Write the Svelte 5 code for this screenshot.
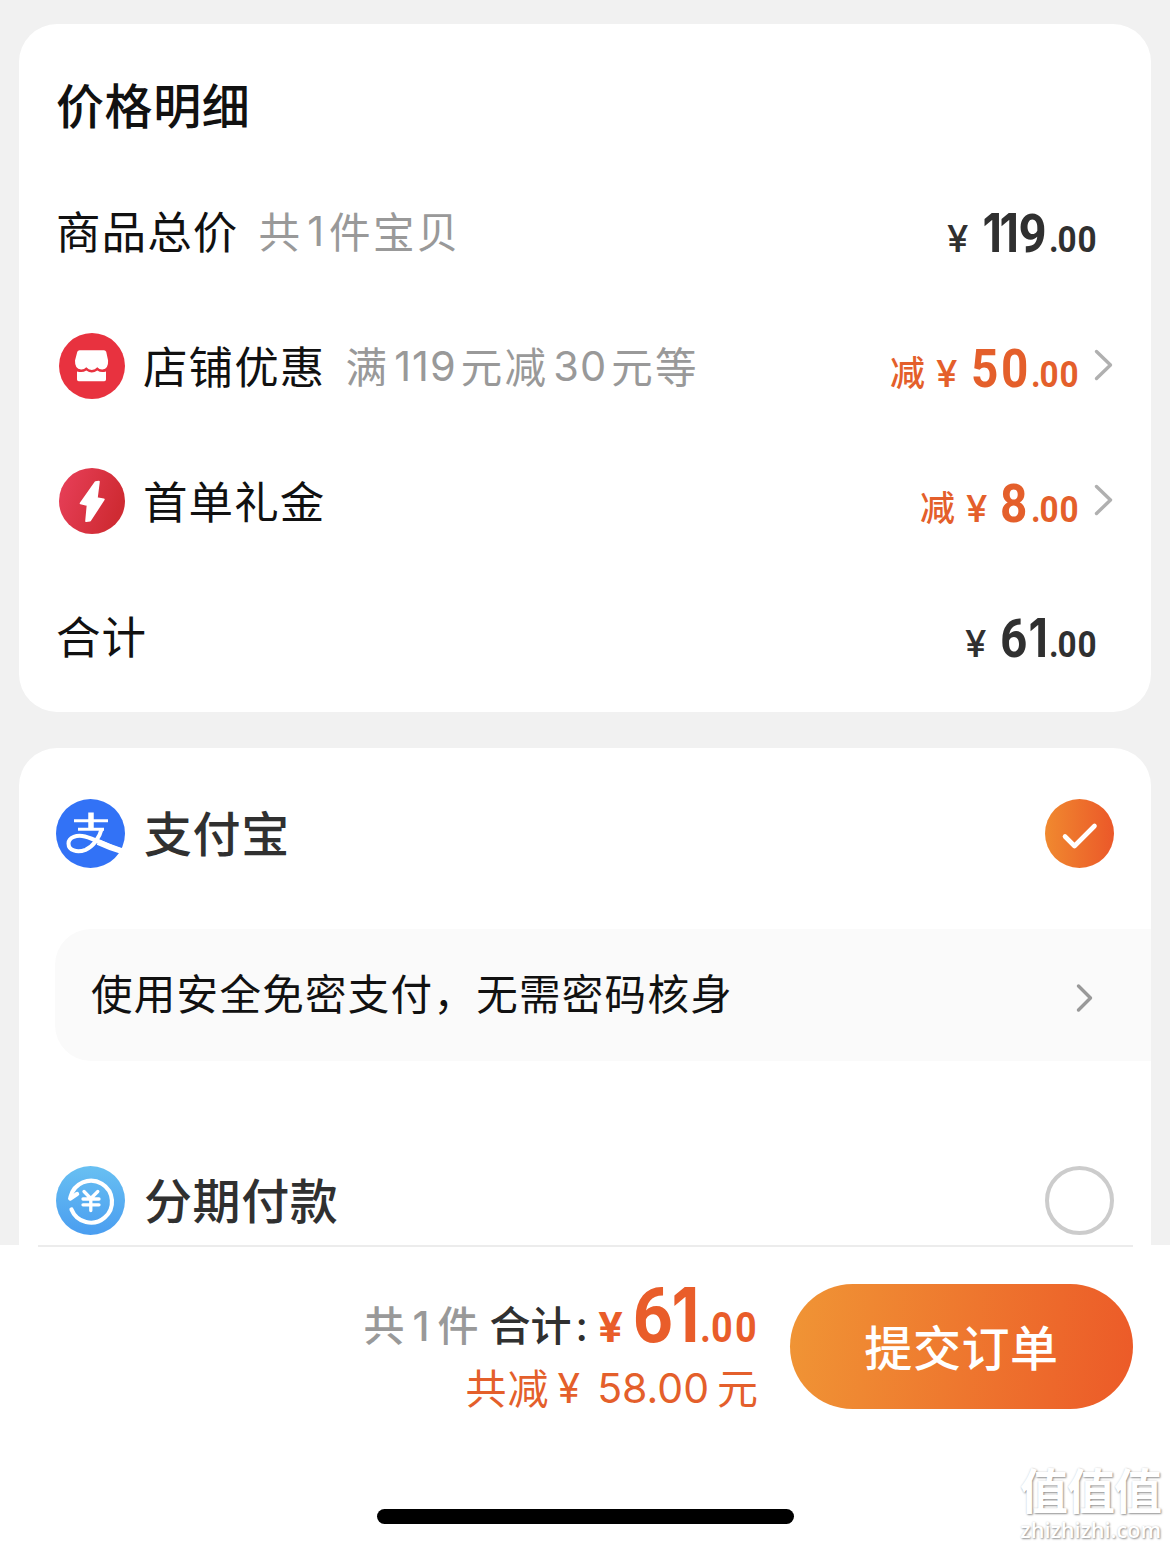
<script>
  // Glyph runs are measured from the right edge of each price: [character, x, horizontal scale].
  const rows = [
    {
      label: '商品总价', note: ['共', '1', '件宝贝'], icon: null, off: false,
      yen: -149, digits: [['1', -113.5, 0.85], ['1', -96.5, 0.85], ['9', -77.5, 0.93]]
    },
    {
      label: '店铺优惠', note: ['满', '119', '元减', '30', '元等'], icon: 'shop', off: true,
      word: -188, yen: -142, digits: [['5', -107, 0.9], ['0', -77, 0.9]]
    },
    {
      label: '首单礼金', note: [], icon: 'bolt', off: true,
      word: -158, yen: -112, digits: [['8', -78, 0.9]]
    },
    {
      label: '合计', note: [], icon: null, off: false,
      yen: -131, digits: [['6', -96, 0.9], ['1', -67.5, 0.85]]
    }
  ];
</script>

<main>
  <div class="scroll">
    <section class="card prices">
      <h2>价格明细</h2>
      {#each rows as row}
        <div class="row" class:off={row.off}>
          {#if row.icon === 'shop'}
            <svg class="badge" viewBox="0 0 66 66">
              <circle cx="33" cy="33" r="33" fill="#e8323f" />
              <path d="M20.500 17.300H45q1.600 0 2.200 1.500L49.100 27.500Q49.500 36 43.500 36.500 40.500 36.700 38.300 34.300 36 36.900 32.800 36.900 29.500 36.900 27.300 34.300 25 36.700 22 36.500 15.700 36 16 27.500L18.300 18.800q.6-1.500 2.200-1.500z" fill="#fff" />
              <path d="M18 38.400Q23.500 40.200 27.300 37.400 32.800 41.500 38.300 37.400 42 40.200 47 38.400V46.500q0 1.700-1.700 1.700H19.700q-1.700 0-1.700-1.700z" fill="#fff" />
            </svg>
          {:else if row.icon === 'bolt'}
            <svg class="badge" viewBox="0 0 66 66">
              <defs>
                <linearGradient id="bolt" x1="0" y1="0" x2="1" y2=".35">
                  <stop offset="0" stop-color="#e8405a" /><stop offset="1" stop-color="#cf2b33" />
                </linearGradient>
              </defs>
              <circle cx="33" cy="33" r="33" fill="url(#bolt)" />
              <path d="M36.500 14.200 39.800 13.700 37.700 30.300 44.700 31.500 31 52.500 27.200 53 28.700 37 21.700 35.300z" fill="#fff" stroke="#fff" stroke-width="2" stroke-linejoin="round" />
            </svg>
          {/if}
          <span class="label">{row.label}</span>
          <span class="note">
            {#each row.note as part}<span class:num={/\d/.test(part)}>{part}</span>{/each}
          </span>
          <svg class="amount" viewBox="-210 0 210 60">
            {#if row.word}<text class="word" x={row.word} y="49.500">减</text>{/if}
            <text class="yen" transform="translate({row.yen} 51) scale(1.04 1)">¥</text>
            {#each row.digits as [ch, x, sx]}
              <text class="digit" class:one={ch === '1'} font-size="53" transform="translate({x} 51) scale({sx} 1)">{ch}</text>
            {/each}
            <text class="digit" font-size="37" transform="translate(-47 51) scale(.9 1)" x="0 9.400 31.600">.00</text>
          </svg>
          {#if row.off}
            <svg class="chevron" viewBox="0 0 20 34"><path d="M2.500 3.500 16.500 17 2.500 30.500" /></svg>
          {/if}
        </div>
      {/each}
    </section>

    <section class="card">
      <div class="method">
        <svg class="logo" viewBox="0 0 69 69">
          <circle cx="34.500" cy="34.500" r="34.500" fill="#3272f6" />
          <g fill="none" stroke="#fff">
            <path d="M35 13.500V30" stroke-width="5.500" />
            <path d="M18 21.800H52" stroke-width="3" />
            <path d="M22 30.300H48" stroke-width="3" />
            <path d="M45.800 29.500C43.500 39 37 47.500 29.500 50.800C21 54 12.500 51.500 12.500 44.500C12.500 38 21 35.500 29 37.500C39 40 52 47.500 65.500 51.500" stroke-width="4" />
            <path d="M42 43Q54 48.500 65.500 52" stroke-width="6" />
          </g>
        </svg>
        <span class="name">支付宝</span>
        <svg class="radio" viewBox="0 0 69 69">
          <defs>
            <linearGradient id="tick"><stop offset="0" stop-color="#f0892f" /><stop offset="1" stop-color="#eb5829" /></linearGradient>
          </defs>
          <circle cx="34.500" cy="34.500" r="34.500" fill="url(#tick)" />
          <path d="M20 37.500 29.500 47 49.500 27" fill="none" stroke="#fff" stroke-width="4.600" stroke-linecap="round" stroke-linejoin="round" />
        </svg>
      </div>
      <div class="secure">
        <span>使用安全免密支付，无需密码核身</span>
        <svg class="small-chevron" viewBox="0 0 20 30"><path d="M3.500 3 15.500 15 3.500 27" /></svg>
      </div>
      <div class="method">
        <svg class="logo" viewBox="0 0 69 69">
          <defs>
            <linearGradient id="sky" x1="0" y1="0" x2="0" y2="1"><stop offset="0" stop-color="#68c0f2" /><stop offset="1" stop-color="#4a9df0" /></linearGradient>
          </defs>
          <circle cx="34.500" cy="34.500" r="34.500" fill="url(#sky)" />
          <g fill="none" stroke="#fff" stroke-width="4.200" stroke-linecap="round" stroke-linejoin="round">
            <path d="M15.500 43.500A21 21 0 1 0 14.500 31" />
            <path d="M14.300 32.500 21 28" stroke-width="4.500" />
            <path d="M28 25.500 34.800 32.500 41.800 25.500M34.800 32.500V44.500M27 33H43M27 38.800H43" stroke-width="3.300" />
          </g>
        </svg>
        <span class="name">分期付款</span>
        <svg class="radio" viewBox="0 0 69 69"><circle cx="34.500" cy="34.500" r="32.500" fill="none" stroke="#ccc" stroke-width="4" /></svg>
      </div>
    </section>
  </div>

  <footer>
    <div class="bar">
      <div class="totals">
        <div class="line total">
          <span class="count">共<span class="num">1</span>件</span>
          <span class="sum">合计<span class="colon">:</span></span>
          <svg class="grand" viewBox="0 0 160 64">
            <text class="yen strong" transform="translate(0 47.500) scale(1.070 1)">¥</text>
            <text class="digit" font-size="76" transform="translate(34.500 47.500) scale(.93 1)">6</text>
            <text class="digit one" font-size="76" transform="translate(73.500 47.500) scale(.85 1)">1</text>
            <text class="digit" font-size="42" transform="translate(102 47.500) scale(.9 1)" x="0 12.200 38.900">.00</text>
          </svg>
        </div>
        <div class="line saved"><span class="sc">共减</span><span class="sy">¥</span><span class="sn">58.00</span><span class="sc">元</span></div>
      </div>
      <button>提交订单</button>
    </div>
    <div class="home"></div>
    <div class="mark"><b>值值值</b><i>zhizhizhi.com</i></div>
  </footer>
</main>

<style>
  :global(body) { margin: 0; background: #f1f1f1; }
  main {
    width: 1170px; height: 1548px; overflow: hidden; background: #f1f1f1; color: #111;
    font-family: Inter, "Noto Sans CJK SC", sans-serif; white-space: nowrap;
  }
  .scroll { box-sizing: border-box; height: 1245px; padding: 24px 19px 0; overflow: hidden; display: flex; flex-direction: column; gap: 36px; }
  .card { flex: none; background: #fff; border-radius: 38px; overflow: hidden; }
  .prices { height: 688px; }
  h2 {
    margin: 0; padding: 21px 0 2px 37px; height: 116px; line-height: 116px;
    font-size: 48px; font-weight: 500; letter-spacing: .6px; font-family: "Noto Sans CJK SC", sans-serif;
  }
  .row { height: 135px; padding: 0 55px 0 37px; display: flex; align-items: center; }
  .row.off { padding: 0 37px 0 40px; }
  .badge { width: 66px; height: 66px; margin-right: 18px; }
  .label { padding-bottom: 2px; font: 400 44.500px/60px "Noto Sans CJK SC", sans-serif; letter-spacing: 1.100px; }
  .note { display: flex; margin-left: 20px; color: #999; font: 400 41.500px/60px "Noto Sans CJK SC", sans-serif; letter-spacing: 2.300px; }
  .note .num { font-family: Inter, sans-serif; font-size: 41.500px; margin: 1px 4px 0 5px; letter-spacing: 1px; }
  .amount { width: 210px; height: 60px; margin-left: auto; fill: #303030; overflow: visible; }
  .off .amount { fill: #e45f2b; }
  .word { font: 500 35px "Noto Sans CJK SC", sans-serif; }
  .yen { font: 500 37px Inter, sans-serif; }
  .yen.strong { font-size: 41px; font-weight: 700; }
  .digit { font-family: Roboto, sans-serif; font-weight: 700; }
  .digit.one { font-family: Inter, sans-serif; }
  .chevron { width: 20px; height: 34px; margin: 0 0 2px 16px; fill: none; stroke: #b0b0b0; stroke-width: 3.400; stroke-linecap: round; stroke-linejoin: round; }
  .method { height: 171px; padding: 0 37px; display: flex; align-items: center; }
  .logo { width: 69px; height: 69px; }
  .name { margin-left: 19px; padding-bottom: 5px; color: #303030; font: 500 48px/70px "Noto Sans CJK SC", sans-serif; letter-spacing: .6px; }
  .radio { width: 69px; height: 69px; margin-left: auto; }
  .secure {
    margin: 10px 0 54px 36px; padding: 0 56px 0 36px; height: 132px; border-radius: 36px 0 0 36px; background: #fafafa;
    display: flex; align-items: center; justify-content: space-between;
    font: 400 41.500px/60px "Noto Sans CJK SC", sans-serif; letter-spacing: 1.300px;
  }
  .secure span { padding-bottom: 6px; }
  .small-chevron { width: 20px; height: 30px; margin-top: 6px; fill: none; stroke: #999; stroke-width: 3.400; stroke-linecap: round; stroke-linejoin: round; }
  footer { position: relative; height: 303px; background: #fff; }
  .bar { height: 162px; margin: 0 37px 0 38px; border-top: 2px solid #ececec; display: flex; justify-content: flex-end; align-items: flex-start; }
  .totals { padding-top: 37px; margin-right: 32px; display: flex; flex-direction: column; align-items: flex-end; }
  .line { display: flex; align-items: center; font-family: "Noto Sans CJK SC", sans-serif; }
  .total { height: 84px; font-size: 41px; font-weight: 500; color: #303030; }
  .count, .sum { padding-bottom: 7px; }
  .count { color: #999; margin-right: 11px; }
  .count .num { font-family: Inter, sans-serif; margin: 0 8px; }
  .colon { font-family: Inter, sans-serif; margin-left: 4px; }
  .grand { width: 160px; height: 64px; margin-left: 10px; fill: #e95d2a; overflow: visible; }
  .saved { height: 40px; line-height: 40px; color: #e45f2b; font-size: 41px; }
  .sc { padding-bottom: 5px; letter-spacing: 1px; }
  .sc:last-child { letter-spacing: 0; }
  .sy, .sn { font-family: Inter, sans-serif; }
  .sy { margin: 0 17px 0 8px; }
  .sn { margin-right: 8px; }
  button {
    width: 343px; height: 125px; margin: 37px 0 0; padding: 0 0 4px; border: 0; border-radius: 63px; color: #fff;
    background: linear-gradient(97deg, #f09535, #ec5a28);
    font: 500 48px/70px "Noto Sans CJK SC", sans-serif; letter-spacing: .6px;
  }
  .home { width: 417px; height: 15px; margin: 100px auto 0; border-radius: 8px; background: #000; }
  .mark {
    position: absolute; right: 9px; bottom: 5px; display: flex; flex-direction: column; align-items: flex-end; color: #fff;
    text-shadow: 1px 1px 2px rgba(0,0,0,.4), 0 0 2px rgba(0,0,0,.15); font-family: "Open Sans", "Noto Sans CJK SC", sans-serif;
  }
  .mark b { font: 700 48px/56px "Noto Sans CJK SC", sans-serif; letter-spacing: -1px; }
  .mark i { font-style: normal; font-weight: 600; font-size: 21.600px; line-height: 27px; }
</style>
